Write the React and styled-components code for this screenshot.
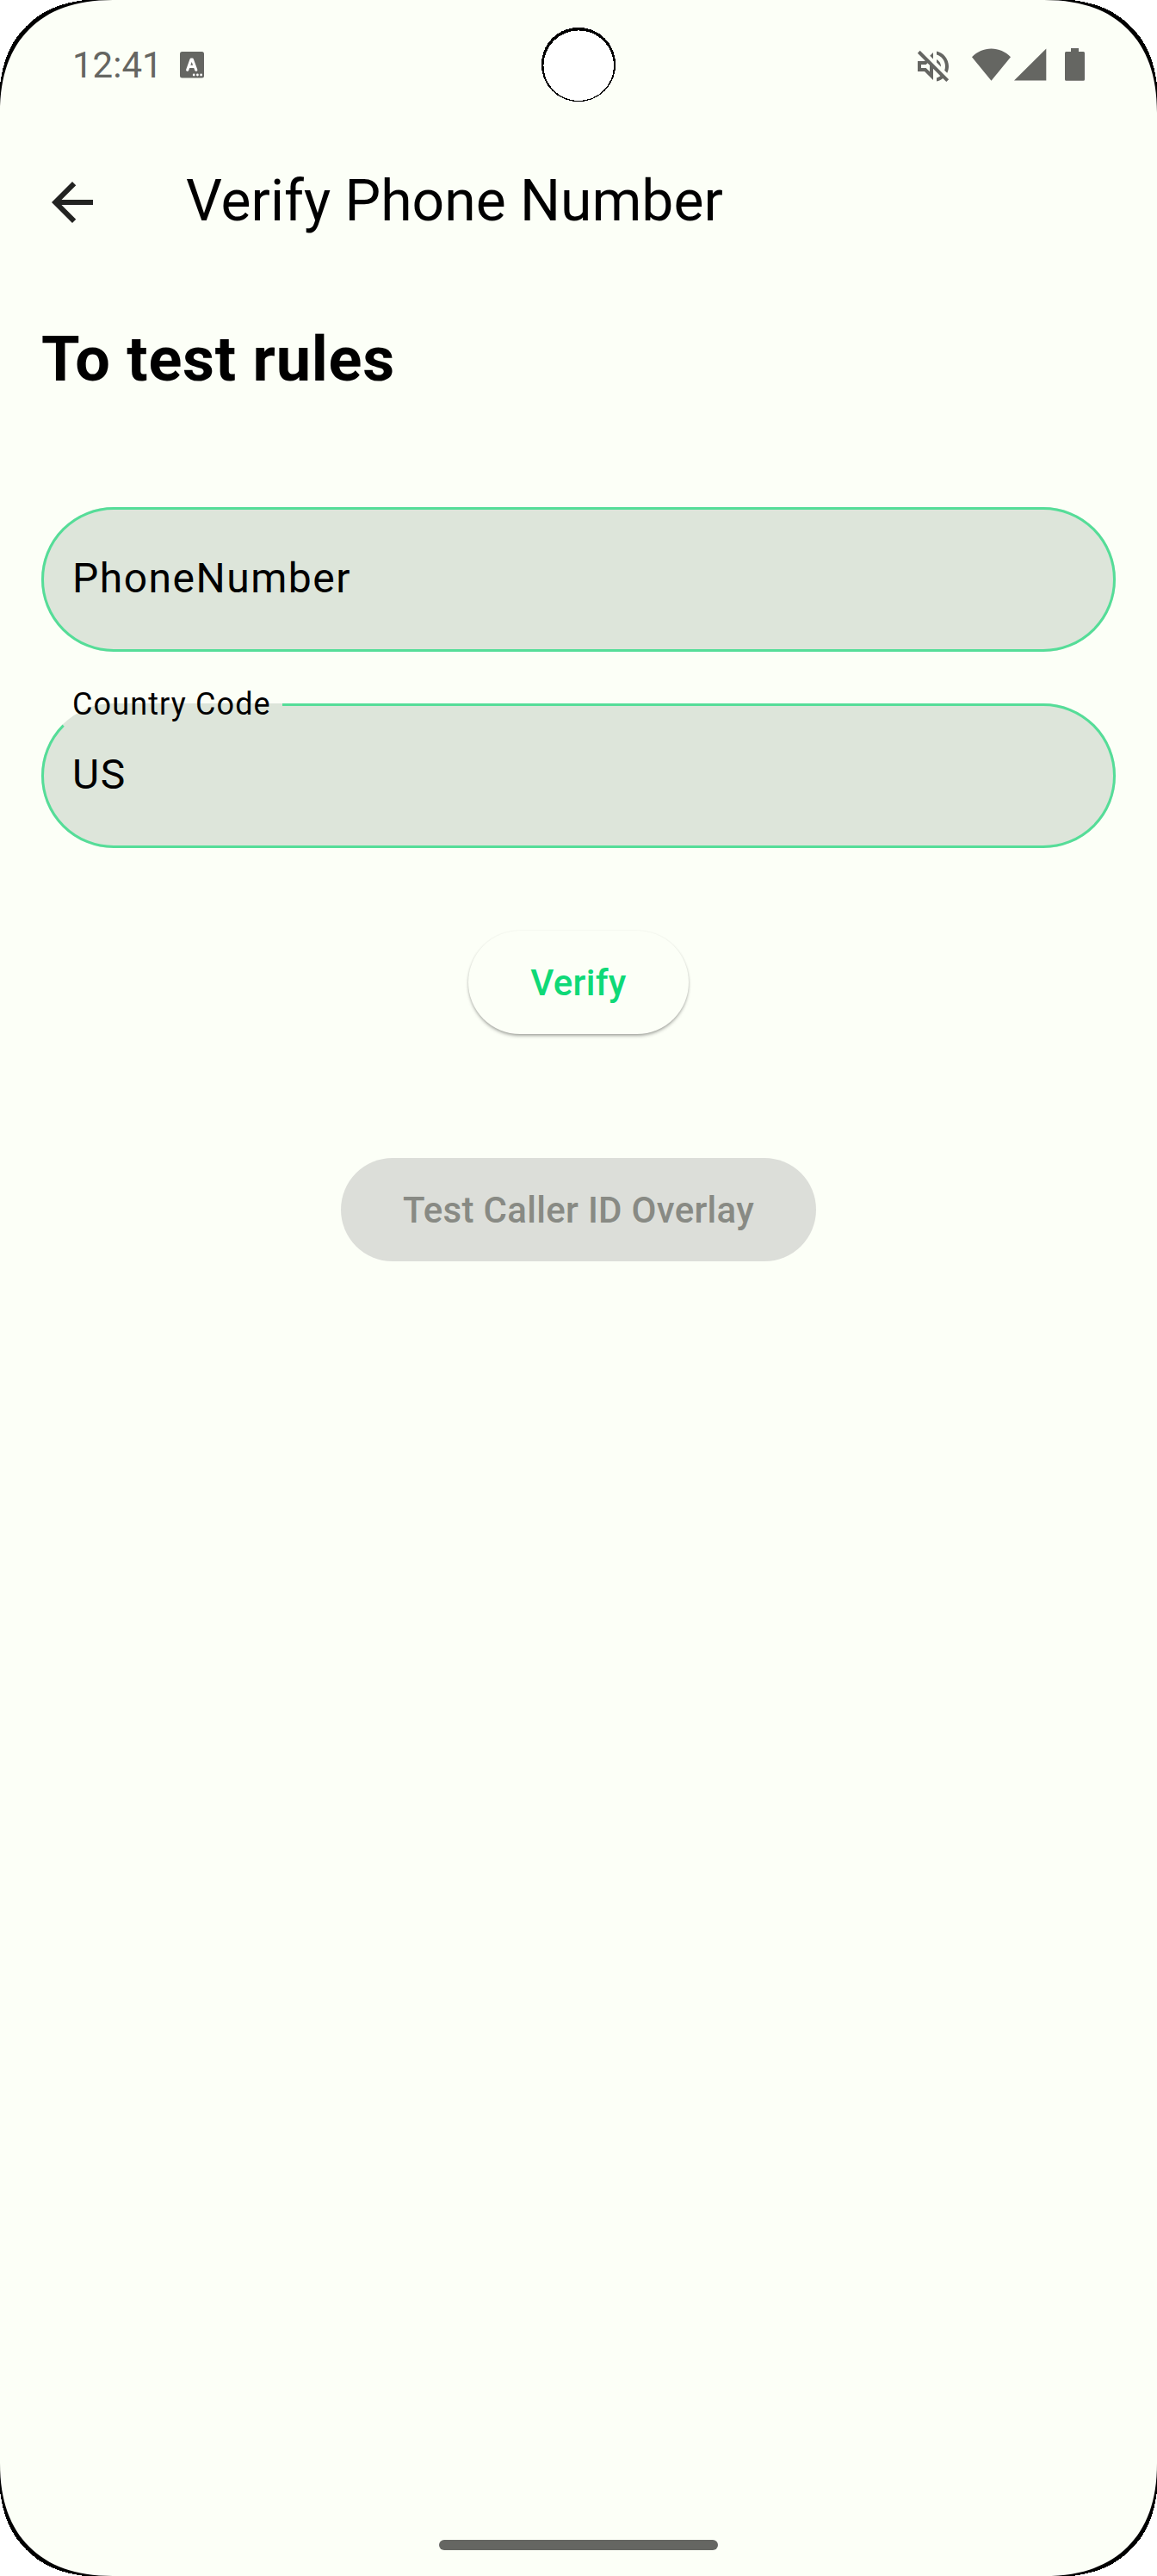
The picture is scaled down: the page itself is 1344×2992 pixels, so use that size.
import React from "react";
import styled, { createGlobalStyle } from "styled-components";

const color = {
  surface: "#fcfff7",
  field: "#dde5da",
  outline: "#55dd98",
  accent: "#0fd977",
  system: "#656662",
  text: "#000000",
};

const GlobalStyle = createGlobalStyle`
  body { margin: 0; background: #ffffff; }
  * { box-sizing: border-box; }
`;

const Screen = styled.div`
  position: relative;
  display: flex;
  flex-direction: column;
  width: 1344px;
  height: 2992px;
  overflow: hidden;
  background: ${color.surface};
  color: ${color.text};
  font-family: Roboto, "Noto Sans", sans-serif;
  white-space: nowrap;
`;

const StatusBar = styled.header`
  display: flex;
  align-items: center;
  justify-content: space-between;
  height: 151px;
  padding: 0 84px;
  color: ${color.system};
`;

const StatusGroup = styled.div`
  display: flex;
  align-items: center;
`;

const Clock = styled.span`
  font-size: 42px;
  line-height: 50px;
  letter-spacing: 0;
`;

const Icon = styled.svg`
  display: block;
  flex: none;
  width: ${(p) => p.$w}px;
  height: ${(p) => p.$h}px;
  margin-left: ${(p) => p.$gap || 0}px;
  margin-top: ${(p) => p.$drop || 0}px;
  fill: currentColor;
`;

const AppBar = styled.nav`
  display: flex;
  align-items: center;
  gap: 96px;
  height: 168px;
  padding: 0 48px;
`;

const BackButton = styled.button`
  display: flex;
  padding: 0;
  border: 0;
  background: none;
  color: #222321;
`;

const Title = styled.h1`
  margin: 0 0 2px;
  font-size: 66px;
  font-weight: 400;
  line-height: 84px;
`;

const Content = styled.main`
  display: flex;
  flex: 1;
  flex-direction: column;
  padding: 51px 48px 0;
`;

const Heading = styled.h2`
  margin: 0 0 123px;
  font-size: 72px;
  font-weight: 700;
  line-height: 96px;
  letter-spacing: 0.75px;
`;

const Form = styled.form`
  display: flex;
  flex-direction: column;
  gap: 60px;
`;

const Field = styled.label`
  position: relative;
  display: flex;
  align-items: center;
  height: 168px;
  padding: 0 36px 2px;
  border-radius: 84px;
  background: ${color.field};

  &::after {
    content: "";
    position: absolute;
    inset: 0;
    border: 3px solid ${color.outline};
    border-radius: 84px;
    clip-path: ${(p) =>
      p.$notched
        ? "polygon(0 0, 40px 40px, 280px 40px, 280px 0, 100% 0, 100% 100%, 0 100%)"
        : "none"};
  }
`;

const FieldText = styled.span`
  font-size: 48px;
  line-height: 72px;
  letter-spacing: 1.5px;
`;

const FloatingLabel = styled.span`
  position: absolute;
  top: -23px;
  left: 36px;
  font-size: 36px;
  line-height: 48px;
  letter-spacing: 1.125px;
`;

const Actions = styled.div`
  display: flex;
  flex-direction: column;
  align-items: center;
  gap: 144px;
  padding-top: 96px;
`;

const Button = styled.button`
  height: 120px;
  padding: 2px 72px 0;
  border: 0;
  border-radius: 60px;
  background: ${(p) => (p.disabled ? "#dcded9" : color.surface)};
  color: ${(p) => (p.disabled ? "#888a84" : color.accent)};
  box-shadow: ${(p) =>
    p.disabled
      ? "none"
      : "0 3px 4px -1px rgba(0,0,0,.3), 0 1px 3px rgba(0,0,0,.14)"};
  font: 500 42px/60px Roboto, "Noto Sans", sans-serif;
  letter-spacing: 0.3px;
`;

const GestureArea = styled.footer`
  display: flex;
  justify-content: center;
  height: 42px;
`;

const GestureHandle = styled.div`
  width: 324px;
  height: 12px;
  border-radius: 6px;
  background: ${color.system};
`;

const Bezel = styled.svg`
  position: absolute;
  top: ${(p) => (p.$bottom ? "auto" : 0)};
  bottom: ${(p) => (p.$bottom ? 0 : "auto")};
  left: ${(p) => (p.$right ? "auto" : 0)};
  right: ${(p) => (p.$right ? 0 : "auto")};
  width: 140px;
  height: 140px;
  transform: scale(${(p) => (p.$right ? -1 : 1)}, ${(p) => (p.$bottom ? -1 : 1)});
`;

const Camera = styled.svg`
  position: absolute;
  top: 30px;
  left: 627px;
  width: 90px;
  height: 90px;
`;

function Corner({ right, bottom }) {
  return (
    <Bezel viewBox="0 0 140 140" $right={right} $bottom={bottom} aria-hidden="true">
      <path d="M0 0H131C87 0 56 12 34 34C12 56 0 87 0 131Z" fill="#000" />
      <path
        d="M0 0H98C70 4 50 11 30.5 30.5C11 50 4 70 0 98Z"
        fill="#fff"
        shapeRendering="crispEdges"
      />
    </Bezel>
  );
}

export default function App() {
  return (
    <>
      <GlobalStyle />
      <Screen>
        <StatusBar>
          <StatusGroup>
            <Clock>12:41</Clock>
            <Icon viewBox="0 0 28 31" $w={28} $h={31} $gap={20}>
              <rect width="28" height="30.5" rx="2.5" />
              <path
                d="M8.7 21.2L13 9.2H14.4L18.8 21.2M10.5 17.4H17"
                fill="none"
                stroke="#fff"
                strokeWidth="3.2"
                strokeLinecap="round"
                strokeLinejoin="round"
              />
              <circle cx="16.2" cy="27" r="1.4" fill="#fff" />
              <circle cx="20.4" cy="27" r="1.4" fill="#fff" />
              <circle cx="24.6" cy="27" r="1.4" fill="#fff" />
            </Icon>
          </StatusGroup>
          <StatusGroup>
            <Icon viewBox="0 0 24 24" $w={48} $h={48} $drop={2}>
              <path d="M4.34 2.93L2.93 4.34 7.29 8.7 7 9H3v6h4l5 5v-6.59l4.18 4.18c-.65.49-1.38.88-2.18 1.11v2.06c1.34-.3 2.57-.92 3.61-1.75l2.05 2.05 1.41-1.41L4.34 2.93zM10 15.17L7.83 13H5v-2h2.83l.88-.88L10 11.41v3.76zM19 12c0 .82-.15 1.61-.41 2.34l1.53 1.53c.56-1.17.88-2.48.88-3.87 0-4.28-2.99-7.86-7-8.77v2.06c2.89.86 5 3.54 5 6.71zm-7-8l-1.88 1.88L12 7.76zm4.5 8c0-1.77-1.02-3.29-2.5-4.03v1.79l2.48 2.48c.01-.08.02-.16.02-.24z" />
            </Icon>
            <Icon viewBox="0 0 45 38" $w={45} $h={38} $gap={21} $drop={-2}>
              <path d="M22.5 37.7L0 10.2C6 4 14 .5 22.5 .5S39 4 45 10.2Z" />
            </Icon>
            <Icon viewBox="0 0 38 38" $w={38} $h={38} $gap={4} $drop={-2}>
              <path d="M0 37.6L37.3 .5V37.6Z" />
            </Icon>
            <Icon viewBox="0 0 23 38" $w={23} $h={38} $gap={21} $drop={-2}>
              <path d="M7 0H16V4H21.5Q23 4 23 5.5V36.2Q23 37.7 21.5 37.7H1.5Q0 37.7 0 36.2V5.5Q0 4 1.5 4H7Z" />
            </Icon>
          </StatusGroup>
        </StatusBar>

        <AppBar>
          <BackButton type="button" aria-label="Back">
            <Icon viewBox="0 0 24 24" $w={72} $h={72}>
              <path d="M20 11H7.83l5.59-5.59L12 4l-8 8 8 8 1.41-1.41L7.83 13H20v-2z" />
            </Icon>
          </BackButton>
          <Title>Verify Phone Number</Title>
        </AppBar>

        <Content>
          <Heading>To test rules</Heading>
          <Form>
            <Field>
              <FieldText>PhoneNumber</FieldText>
            </Field>
            <Field $notched>
              <FloatingLabel>Country Code</FloatingLabel>
              <FieldText>US</FieldText>
            </Field>
          </Form>
          <Actions>
            <Button type="button">Verify</Button>
            <Button type="button" disabled>
              Test Caller ID Overlay
            </Button>
          </Actions>
        </Content>

        <GestureArea>
          <GestureHandle />
        </GestureArea>

        <Camera viewBox="0 0 90 90" shapeRendering="crispEdges" aria-hidden="true">
          <circle cx="45" cy="45" r="43.2" fill="#000" />
          <circle cx="45.2" cy="46.2" r="40.8" fill="#fff" />
        </Camera>
        <Corner />
        <Corner right />
        <Corner bottom />
        <Corner right bottom />
      </Screen>
    </>
  );
}
